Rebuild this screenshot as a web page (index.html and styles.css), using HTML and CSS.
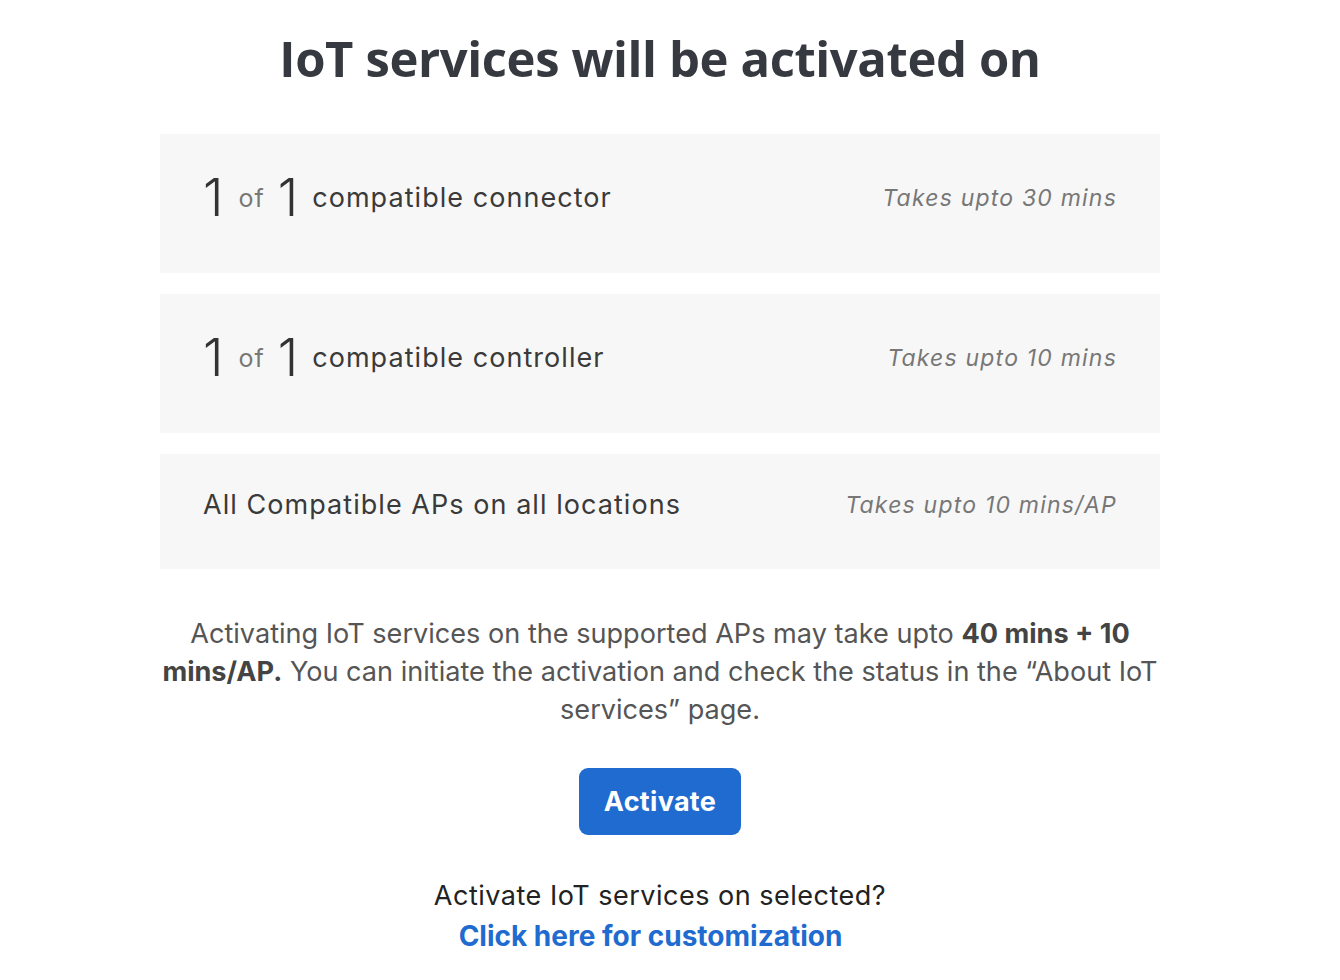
FILE: index.html
```html
<!DOCTYPE html>
<html>
<head>
<meta charset="utf-8">
<link rel="stylesheet" href="styles.css">
</head>
<body>
<main class="page">
  <h1 class="title">IoT services will be activated on</h1>
  <section class="cards">
    <div class="card">
      <div class="card-left"><span class="num">1</span><span class="of">of</span><span class="num">1</span><span class="label">compatible connector</span></div>
      <div class="card-right">Takes upto 30 mins</div>
    </div>
    <div class="card">
      <div class="card-left"><span class="num">1</span><span class="of">of</span><span class="num">1</span><span class="label">compatible controller</span></div>
      <div class="card-right">Takes upto 10 mins</div>
    </div>
    <div class="card card-short">
      <div class="card-left"><span class="label">All Compatible APs on all locations</span></div>
      <div class="card-right">Takes upto 10 mins/AP</div>
    </div>
  </section>
  <p class="note">Activating IoT services on the supported APs may take upto <b>40 mins + 10 mins/AP.</b> You can initiate the activation and check the status in the “About IoT services” page.</p>
  <button class="btn">Activate</button>
  <p class="ask">Activate IoT services on selected?</p>
  <a class="link" href="#">Click here for customization</a>
</main>
</body>
</html>
```
FILE: styles.css
```css
html, body { margin: 0; padding: 0; background: #fff; }
body { padding-right: 20px; }
.page {
  width: 1000px;
  margin: 0 auto;
  display: flex;
  flex-direction: column;
  align-items: center;
  font-family: Inter, "Liberation Sans", sans-serif;
}
.title {
  margin: 28px 0 0;
  font-family: "Open Sans", sans-serif;
  font-weight: 700;
  font-size: 49px;
  line-height: 60px;
  color: #363a40;
  letter-spacing: -0.4px;
}
.cards {
  margin-top: 46px;
  width: 100%;
  display: flex;
  flex-direction: column;
  gap: 21px;
}
.card {
  height: 139px;
  background: #f7f7f7;
  display: flex;
  align-items: center;
  justify-content: space-between;
  padding: 0 43px;
  box-sizing: border-box;
}
.card-short { height: 115px; }
.card-left { display: flex; align-items: center; color: #333; margin-top: -12px; height: 60px; }
.card-short .card-left { margin-top: -14px; }
.num { font-size: 52px; font-weight: 300; color: #333; line-height: 60px; }
.of { font-size: 25px; color: #777; margin: 0 13px 0 15px; letter-spacing: 1px; }
.num + .of + .num { margin-right: 14px; }
.label { font-size: 27px; letter-spacing: 1.05px; color: #3a3a3a; }
.card-right {
  font-size: 23px;
  font-style: italic;
  color: #777;
  letter-spacing: 1.2px;
  margin-top: -12px;
}
.card-short .card-right { margin-top: -14px; }
.note {
  margin: 46px 0 0;
  font-family: Inter, sans-serif;
  font-size: 27.1px;
  line-height: 38px;
  color: #555;
  text-align: center;
}
.note b { color: #444; font-weight: 700; }
.btn {
  margin-top: 39px;
  width: 162px;
  height: 67px;
  border: none;
  border-radius: 9px;
  background: #1f6bcf;
  color: #fff;
  font-family: Inter, sans-serif;
  font-weight: 700;
  font-size: 27px;
  letter-spacing: 0.3px;
}
.ask {
  margin: 44px 0 0;
  font-size: 27px;
  line-height: 34px;
  color: #222;
  letter-spacing: 0.5px;
}
.link {
  margin-top: 6px;
  margin-right: 19px;
  font-size: 28px;
  line-height: 34px;
  font-weight: 700;
  color: #1f6bcf;
  text-decoration: none;
}
```
